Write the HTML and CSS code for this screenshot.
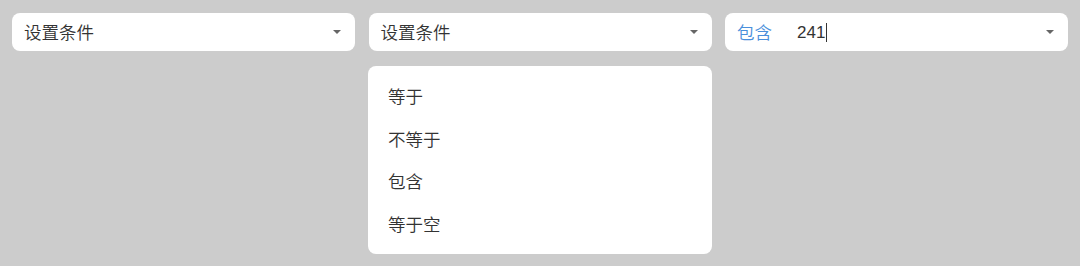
FILE: index.html
```html
<!DOCTYPE html>
<html lang="zh">
<head>
<meta charset="utf-8">
<link rel="stylesheet" href="styles.css">
</head>
<body>
<div class="row">
  <div class="col">
    <div class="select">
      <span class="value">设置条件</span>
      <span class="arrow"></span>
    </div>
  </div>
  <div class="col">
    <div class="select">
      <span class="value">设置条件</span>
      <span class="arrow"></span>
    </div>
    <ul class="menu">
      <li>等于</li>
      <li>不等于</li>
      <li>包含</li>
      <li>等于空</li>
    </ul>
  </div>
  <div class="col">
    <div class="select">
      <span class="tag">包含</span>
      <span class="value"><span class="num">241</span><span class="caret"></span></span>
      <span class="arrow"></span>
    </div>
  </div>
</div>
</body>
</html>
```
FILE: styles.css
```css
html, body {
  margin: 0;
  padding: 0;
  background: #cccccc;
  font-family: "Noto Sans CJK SC", "Noto Sans", sans-serif;
  color: #333333;
}
.row {
  display: flex;
  gap: 13.5px;
  padding: 13px 0 0 12px;
  align-items: flex-start;
}
.col {
  width: 343px;
  display: flex;
  flex-direction: column;
}
.select {
  height: 38px;
  background: #ffffff;
  border-radius: 8px;
  display: flex;
  align-items: center;
  padding: 0 12px;
  box-sizing: border-box;
  font-size: 17.5px;
  font-weight: 350;
}
.value {
  flex: 1;
  display: flex;
  align-items: center;
  line-height: 20px;
}
.num {
  font-family: "Liberation Sans", "Noto Sans CJK SC", sans-serif;
  font-weight: 400;
  font-size: 17px;
  position: relative;
  top: 1px;
}
.tag {
  color: #4a8fdb;
  margin-right: 25px;
  line-height: 20px;
}
.caret {
  display: inline-block;
  width: 1px;
  height: 19px;
  background: #333333;
  margin-left: 1px;
}
.arrow {
  width: 0;
  height: 0;
  border-left: 4px solid transparent;
  border-right: 4px solid transparent;
  border-top: 4px solid #666666;
  margin-right: 2px;
}
.menu {
  list-style: none;
  margin: 15px 0 0 0;
  padding: 9px 0;
  width: 344px;
  margin-left: -0.5px;
  background: #ffffff;
  border-radius: 8px;
  box-sizing: border-box;
}
.menu li {
  height: 42.5px;
  line-height: 42.5px;
  padding-left: 20px;
  font-size: 17.5px;
  font-weight: 350;
}
```
